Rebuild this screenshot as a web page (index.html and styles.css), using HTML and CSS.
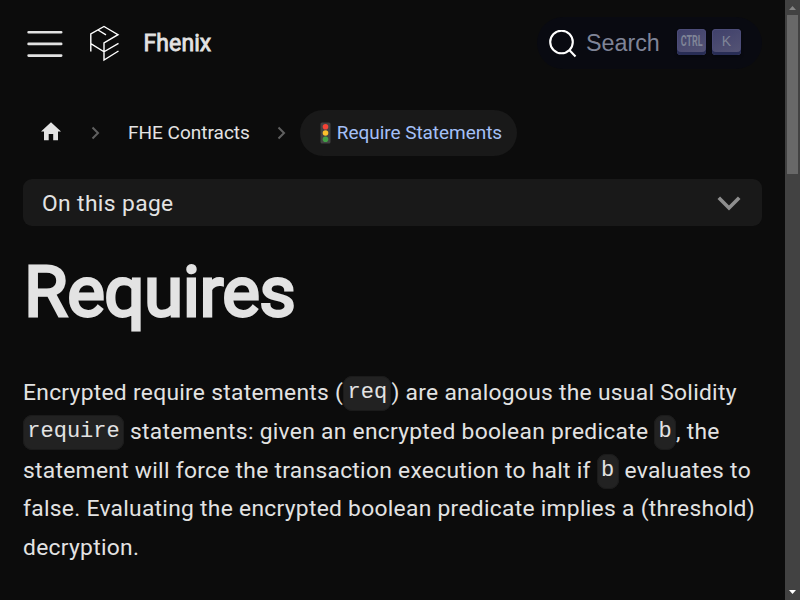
FILE: index.html
```html
<!DOCTYPE html>
<html lang="en">
<head>
<meta charset="utf-8">
<title>Requires | Fhenix</title>
<link rel="stylesheet" href="styles.css">
</head>
<body>
<div class="page">
  <header class="navbar">
    <svg class="menu" width="36" height="30" viewBox="0 0 36 30"><path d="M1.6 3.2H34.2M1.6 14.9H34.2M1.6 26.6H34.2"/></svg>
    <svg class="logo" width="31" height="37" viewBox="0 0 31 37"><path d="M1.8 26.5V9L15 1.5L29 9.7L15 18V35L29.5 26M1.8 18.7L15 26.8L29.5 18.3M9 5L17 9.8"/></svg>
    <span class="brand">Fhenix</span>
    <div class="search">
      <svg class="glass" width="28" height="28" viewBox="0 0 28 28"><circle cx="12.5" cy="12" r="11.3"/><path d="M20.5 20.2L26.5 26.5"/></svg>
      <span class="search-label">Search</span>
      <kbd class="key"><span class="ctrl">CTRL</span></kbd>
      <kbd class="key"><span>K</span></kbd>
    </div>
  </header>
  <main>
    <nav class="crumbs">
      <svg class="home" width="20" height="19" viewBox="0 0 20 19"><path d="M10 .2L20 9.5H17V18.2H12.2V12H7.7V18.2H3V9.5H0Z"/></svg>
      <svg class="sep" width="9" height="14" viewBox="0 0 9 14"><path d="M1.5 1.5L7 7L1.5 12.5"/></svg>
      <span class="crumb">FHE Contracts</span>
      <svg class="sep last" width="9" height="14" viewBox="0 0 9 14"><path d="M1.5 1.5L7 7L1.5 12.5"/></svg>
      <span class="active"><svg width="11" height="22" viewBox="0 0 11 22"><rect x=".5" y=".5" width="10" height="21" rx="1.5" fill="#424242"/><circle cx="5.5" cy="4.7" r="2.8" fill="#f44336"/><circle cx="5.5" cy="11" r="2.8" fill="#fbc02d"/><circle cx="5.5" cy="17.3" r="2.8" fill="#43a047"/></svg><span class="crumb">Require Statements</span></span>
    </nav>
    <div class="toc"><span>On this page</span><svg width="24" height="15" viewBox="0 0 24 15"><path d="M1.8 1.8L12 12L22.2 1.8"/></svg></div>
    <h1>Requires</h1>
    <p>Encrypted require statements (<code>req</code>) are analogous the usual Solidity<br><code>require</code> statements: given an encrypted boolean predicate <code>b</code>, the<br>statement will force the transaction execution to halt if <code>b</code> evaluates to<br>false. Evaluating the encrypted boolean predicate implies a (threshold)<br>decryption.</p>
  </main>
</div>
<aside class="scrollbar">
  <svg width="15" height="15" viewBox="0 0 15 15"><path fill="#858585" d="M4 10H11L7.5 6Z"/></svg>
  <div class="thumb"></div>
  <svg class="down" width="15" height="15" viewBox="0 0 15 15"><path fill="#fff" d="M4 5H11L7.5 9Z"/></svg>
</aside>
</body>
</html>
```

FILE: styles.css
```css
* { box-sizing: border-box; }
body {
  margin: 0;
  height: 600px;
  overflow: hidden;
  display: grid;
  grid-template-columns: 785px 15px;
  background: #0c0c0c;
  color: #e3e3e3;
  font-family: Roboto, sans-serif;
  font-size: 22.8px;
}
svg { display: block; flex: none; }
path { stroke-linecap: butt; }
.navbar {
  height: 86px;
  display: flex;
  align-items: center;
  padding: 0 23px 0 27px;
}
.menu { margin-top: 2px; }
.menu path { fill: none; stroke: #e3e3e3; stroke-width: 2.6; stroke-linecap: round; }
.logo { margin-left: 26px; }
.logo path { fill: none; stroke: #fff; stroke-width: 1.4; }
.brand {
  margin: 2px 0 0 23.5px;
  font-size: 23px;
  line-height: 30px;
  letter-spacing: .1px;
  -webkit-text-stroke: .8px #e3e3e3;
}
.search {
  margin-left: auto;
  width: 225px;
  height: 52px;
  border-radius: 26px;
  background: #090a11;
  display: flex;
  align-items: center;
  padding-left: 12px;
}
.glass { margin-top: 2px; }
.glass path, .glass circle { fill: none; stroke: #fff; stroke-width: 2.1; }
.search-label {
  width: 91px;
  margin-left: 9px;
  font: 23.3px/30px "Liberation Sans", sans-serif;
  color: #7f8497;
}
.key {
  width: 29px;
  height: 26px;
  margin-right: 6px;
  margin-top: -2px;
  padding-bottom: 3px;
  border-radius: 4px;
  background: linear-gradient(155deg, #3f406b, #565575);
  box-shadow: inset 0 -3px #282d55, inset 0 0 0 1px #4c4c78, 0 2px 3px #03040966;
  display: flex;
  align-items: center;
  justify-content: center;
  color: #7f8497;
  font: 14px/20px "Liberation Sans", sans-serif;
}
.ctrl { font: 700 14.5px/20px Roboto, sans-serif; transform: translateY(1px) scaleX(.62); }
main { padding: 0 23px; }
.crumbs {
  height: 46px;
  margin-top: 24px;
  display: flex;
  align-items: center;
  font-size: 19px;
}
.home { margin-left: 18px; fill: #e3e3e3; margin-top: -3px; }
.sep { margin: 0 28px 0 30px; }
.sep path { fill: none; stroke: #606060; stroke-width: 2; }
.sep.last { margin: 0 14px 0 27px; }
.crumb { white-space: nowrap; margin-top: -2px; }
.active {
  height: 46px;
  width: 217px;
  border-radius: 23px;
  background: #191919;
  color: #a4c0f8;
  display: flex;
  align-items: center;
  padding-left: 20px;
}
.active .crumb { letter-spacing: -.05px; }
.active svg { margin-right: 6px; }
.toc {
  height: 47px;
  margin-top: 23px;
  border-radius: 9px;
  background: #191919;
  display: flex;
  align-items: center;
  justify-content: space-between;
  padding: 1px 21.5px 0 19px;
  letter-spacing: .38px;
}
.toc path { fill: none; stroke: #8e8e8e; stroke-width: 3.6; }
h1 {
  margin: 22px 0 0 1px;
  font-size: 71px;
  line-height: 88px;
  font-weight: 400;
  letter-spacing: -.55px;
  -webkit-text-stroke: 2.8px #e3e3e3;
}
p { margin: 38px 0 0; line-height: 38.8px; white-space: nowrap; letter-spacing: .29px; }
code {
  font: 22px/1 "Liberation Mono", monospace;
  letter-spacing: 0;
  background: #222;
  border: 1px solid #1b1b1b;
  border-radius: 9px;
  padding: 3px 3.3px 5px;
  vertical-align: 2px;
}
.scrollbar {
  background: #424242;
  display: flex;
  flex-direction: column;
}
.thumb { width: 11px; height: 159px; margin-left: 2px; background: #686868; }
.down { margin-top: auto; }
```
